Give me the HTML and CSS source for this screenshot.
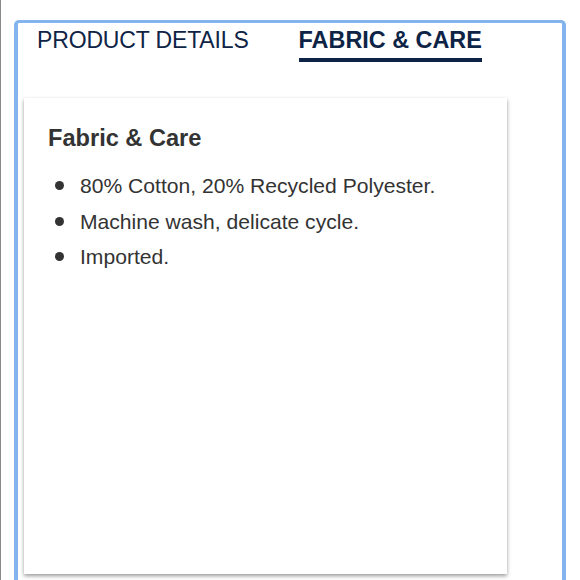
FILE: index.html
```html
<!DOCTYPE html>
<html lang="en">
<head>
<meta charset="utf-8">
<title>Fabric &amp; Care</title>
<link rel="stylesheet" href="styles.css">
</head>
<body>
<div class="page">
  <div class="frame">
    <div class="tabs">
      <div class="tab">PRODUCT DETAILS</div>
      <div class="tab tab-active">FABRIC &amp; CARE</div>
    </div>
    <div class="card">
      <h2 class="card-title">Fabric &amp; Care</h2>
      <ul class="list">
        <li class="item">80% Cotton, 20% Recycled Polyester.</li>
        <li class="item">Machine wash, delicate cycle.</li>
        <li class="item">Imported.</li>
      </ul>
    </div>
  </div>
</div>
</body>
</html>
```

FILE: styles.css
```css
html, body {
  margin: 0;
  padding: 0;
  background: #ffffff;
  overflow: hidden;
  height: 580px;
}

body {
  font-family: "Liberation Sans", Arial, sans-serif;
}

.page {
  border-left: 1px solid #8a8a8a;
  padding: 20px 14px 0 13px;
  height: 580px;
  box-sizing: border-box;
}

.frame {
  border: 3px solid #84b4ee;
  border-width: 3px 4px 0 4px;
  border-radius: 5px 5px 0 0;
  height: 560px;
  box-sizing: border-box;
}

.tabs {
  display: flex;
  gap: 50px;
  padding-left: 19px;
}

.tab {
  font-size: 23px;
  line-height: 26px;
  padding: 4px 0 5px;
  color: #0e2446;
  border-bottom: 4px solid transparent;
  letter-spacing: -0.15px;
}

.tab-active {
  font-size: 23.4px;
  font-weight: bold;
  border-bottom-color: #0e2446;
  letter-spacing: 0;
}

.card {
  margin: 36px 0 0 6px;
  width: 483px;
  height: 476px;
  box-sizing: border-box;
  padding: 26px 24px;
  background: #ffffff;
  box-shadow: 0 2px 4px rgba(0, 0, 0, 0.4);
}

.card-title {
  margin: 0;
  font-size: 23.6px;
  line-height: 28px;
  font-weight: bold;
  color: #333333;
}

.list {
  list-style: none;
  margin: 16px 0 0;
  padding: 0;
}

.item {
  display: flex;
  align-items: center;
  font-size: 21.1px;
  line-height: 35.5px;
  color: #333333;
}

.item::before {
  content: "";
  width: 9px;
  height: 9px;
  border-radius: 50%;
  background: #333333;
  margin: 0 16px 0 7px;
  flex: none;
}
```
